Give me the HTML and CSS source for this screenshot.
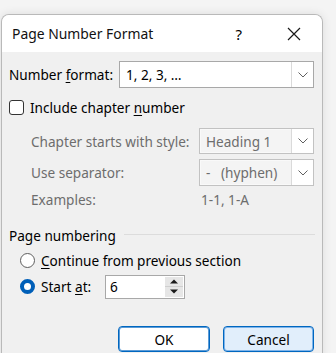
FILE: index.html
```html
<!DOCTYPE html>
<html>
<head>
<meta charset="utf-8">
<link rel="stylesheet" href="styles.css">
</head>
<body>
<div class="dialog">
  <div class="titlebar">
    <span class="title">Page Number Format</span>
    <span class="help">?</span>
    <svg class="close" width="14" height="14" viewBox="0 0 14 14"><path d="M1 1L13 13M13 1L1 13" stroke="#1a1a1a" stroke-width="1.2" fill="none"/></svg>
  </div>
  <div class="body">
    <div class="row r-format">
      <span class="lbl">Number <u>f</u>ormat:</span>
      <div class="combo main">
        <span class="val">1, 2, 3, …</span>
        <span class="drop"><svg width="10" height="6" viewBox="0 0 10 6"><path d="M0.5 0.5L5 5L9.5 0.5" stroke="#606060" stroke-width="1" fill="none"/></svg></span>
      </div>
    </div>
    <div class="row r-check">
      <span class="checkbox"></span>
      <span class="lbl">Include chapter <u>n</u>umber</span>
    </div>
    <div class="row r-chap">
      <span class="lbl dis">Chapter starts with style:</span>
      <div class="combo disabled">
        <span class="val">Heading 1</span>
        <span class="drop"><svg width="10" height="6" viewBox="0 0 10 6"><path d="M0.5 0.5L5 5L9.5 0.5" stroke="#606060" stroke-width="1" fill="none"/></svg></span>
      </div>
    </div>
    <div class="row r-sep">
      <span class="lbl dis">Use separator:</span>
      <div class="combo disabled">
        <span class="val">-&nbsp;&nbsp;&nbsp;(hyphen)</span>
        <span class="drop"><svg width="10" height="6" viewBox="0 0 10 6"><path d="M0.5 0.5L5 5L9.5 0.5" stroke="#606060" stroke-width="1" fill="none"/></svg></span>
      </div>
    </div>
    <div class="row r-ex">
      <span class="lbl dis">Examples:</span>
      <span class="exval dis">1-1, 1-A</span>
    </div>
    <div class="row r-group">
      <span class="lbl">Page numbering</span>
      <span class="line"></span>
    </div>
    <div class="row r-radio1">
      <span class="radio"></span>
      <span class="lbl"><u>C</u>ontinue from previous section</span>
    </div>
    <div class="row r-radio2">
      <span class="radio on"></span>
      <span class="lbl start">Start <u>a</u>t:</span>
      <div class="spin">
        <span class="val">6</span>
        <span class="spinbtns">
          <span class="sb"><svg width="8" height="5" viewBox="0 0 8 5"><path d="M0 4.5L4 0.5L8 4.5Z" fill="#1a1a1a"/></svg></span>
          <span class="sb"><svg width="8" height="5" viewBox="0 0 8 5"><path d="M0 0.5L4 4.5L8 0.5Z" fill="#1a1a1a"/></svg></span>
        </span>
      </div>
    </div>
    <div class="buttons">
      <button class="btn ok">OK</button>
      <button class="btn cancel">Cancel</button>
    </div>
  </div>
</div>
</body>
</html>
```
FILE: styles.css
```css
html, body {
  margin: 0;
  padding: 0;
}
body {
  width: 336px;
  height: 353px;
  overflow: hidden;
  background: #f4f4f4;
  font-family: "Noto Sans", "Open Sans", sans-serif;
  font-size: 13.6px;
  color: #000;
}
.dialog {
  margin-left: 1px;
  margin-top: 14px;
  width: 320px;
  height: 345px;
  border: 1px solid #b9b9b9;
  border-bottom: none;
  border-radius: 8px 8px 0 0;
  overflow: hidden;
  background: #f0f0f0;
  box-shadow: 0 0 10px rgba(0,0,0,0.10);
}
.titlebar {
  height: 37px;
  background: #fff;
  display: flex;
  align-items: center;
  position: relative;
}
.title {
  margin-left: 10px;
  font-size: 13.9px;
  color: #111;
}
.help {
  margin-left: auto;
  font-size: 15px;
  margin-right: 45px;
}
.close {
  margin-right: 21px;
}
.body {
  padding: 9px 7px 0 7px;
  display: flex;
  flex-direction: column;
}
.row {
  display: flex;
  align-items: center;
}
u {
  text-decoration-thickness: 1px;
  text-underline-offset: 2px;
}
.r-format {
  height: 27px;
}
.r-format .lbl {
  width: 110px;
}
.combo {
  display: flex;
  align-items: stretch;
  box-sizing: border-box;
  border: 1px solid #a8a8a8;
  background: #fff;
}
.combo .val {
  flex: 1;
  padding-left: 6px;
  display: flex;
  align-items: center;
}
.combo .drop {
  width: 21px;
  border-left: 1px solid #dadada;
  display: flex;
  align-items: center;
  justify-content: center;
  background: #fff;
}
.combo.main {
  width: 195px;
  height: 27px;
}
.r-check {
  margin-top: 12px;
  height: 15px;
}
.checkbox {
  width: 13px;
  height: 13px;
  border: 1px solid #333;
  border-radius: 3px;
  background: #fff;
  margin-right: 6px;
}
.dis {
  color: #6d6d6d;
}
.r-chap {
  margin-top: 13px;
  height: 26px;
  padding-left: 22px;
}
.r-chap .lbl, .r-sep .lbl, .r-ex .lbl {
  width: 168px;
}
.combo.disabled {
  width: 115px;
  height: 26px;
  border-color: #c2c2c2;
  background: #f4f4f4;
  color: #6d6d6d;
  box-shadow: inset 0 0 0 1px #f9f9f9;
}
.r-sep {
  margin-top: 5px;
  height: 27px;
  padding-left: 22px;
}
.r-sep .combo.disabled {
  height: 27px;
}
.r-ex {
  margin-top: 2px;
  height: 22px;
  padding-left: 22px;
}
.exval {
  margin-left: 2px;
}
.r-group {
  margin-top: 15px;
  height: 20px;
}
.line {
  flex: 1;
  height: 1px;
  background: #dcdcdc;
  margin-left: 8px;
  margin-right: 0;
  margin-top: -1px;
}
.r-radio1 {
  margin-top: 5px;
  height: 20px;
  padding-left: 11px;
}
.radio {
  box-sizing: border-box;
  width: 15px;
  height: 15px;
  border-radius: 50%;
  border: 1px solid #5e5e5e;
  background: #fff;
  margin-right: 6px;
}
.radio.on {
  border: 4px solid #005fb8;
  background: #fff;
}
.r-radio2 {
  margin-top: 4px;
  height: 25px;
  padding-left: 11px;
}
.start {
  width: 64px;
}
.spin {
  box-sizing: border-box;
  width: 80px;
  height: 24px;
  border: 1px solid #a8a8a8;
  background: #fff;
  display: flex;
  align-items: stretch;
}
.spin .val {
  flex: 1;
  padding-left: 4px;
  display: flex;
  align-items: center;
}
.spinbtns {
  width: 18px;
  margin: 1px;
  display: flex;
  flex-direction: column;
  background: #e6e6e6;
}
.sb {
  flex: 1;
  display: flex;
  align-items: center;
  justify-content: center;
  border-bottom: 1px solid #cfcfcf;
}
.sb + .sb {
  border-bottom: none;
}
.buttons {
  margin-top: 27px;
  display: flex;
  justify-content: flex-end;
  gap: 13px;
  padding-right: 1px;
}
.btn {
  box-sizing: border-box;
  height: 26px;
  font-family: "Noto Sans", "Open Sans", sans-serif;
  font-size: 13.6px;
  color: #000;
  border-radius: 4px;
  padding: 0;
}
.ok {
  width: 92px;
  background: #fff;
  border: 1px solid #0067c0;
  box-shadow: inset 0 0 0 1px #5c9bd6;
}
.cancel {
  width: 91px;
  background: #e1eefb;
  border: 1px solid #0067c0;
  box-shadow: inset 0 0 0 1px #7eb4ea;
}
```
